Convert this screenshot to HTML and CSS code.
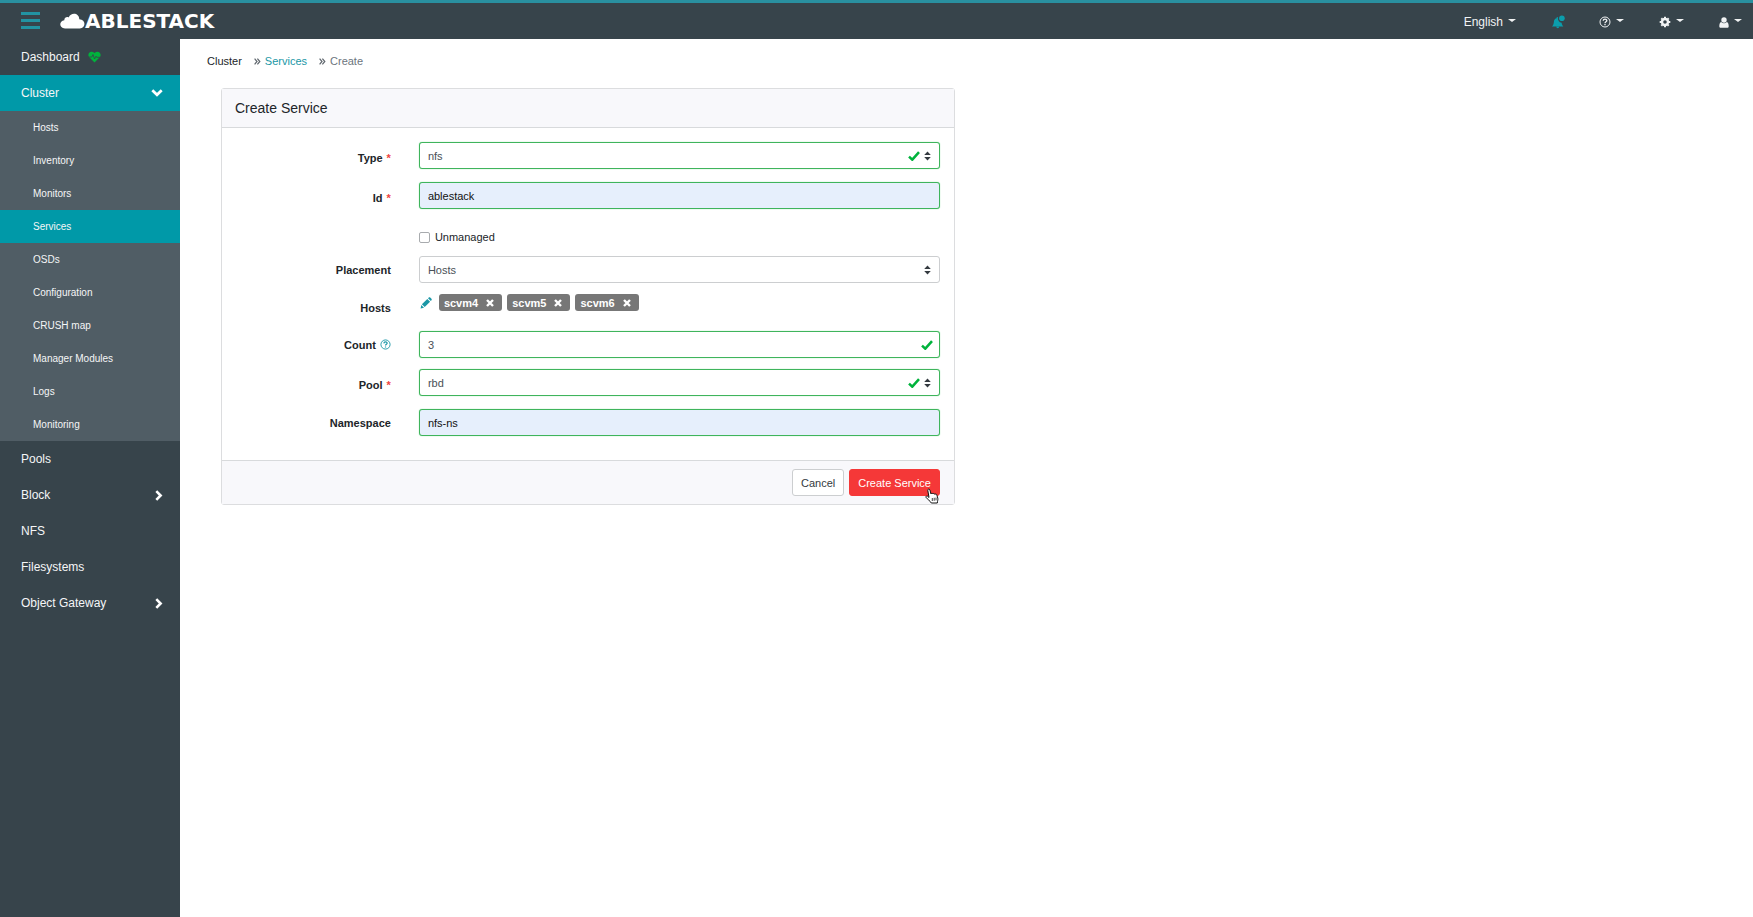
FILE: index.html
```html
<!DOCTYPE html>
<html lang="en">
<head>
<meta charset="utf-8">
<title>Create Service</title>
<link rel="stylesheet" href="styles.css">
</head>
<body>
<svg class="defs" aria-hidden="true">
  <symbol id="check" viewBox="0 0 12 10"><path d="M1 5.6L4.3 8.7L11 1.2" fill="none" stroke="#00b33c" stroke-width="2.5"/></symbol>
  <symbol id="sort" viewBox="0 0 7 10"><path d="M.2 4L3.5 .6L6.8 4zM.2 6L3.5 9.4L6.8 6z" fill="#343a40"/></symbol>
  <symbol id="times" viewBox="0 0 8 8"><path d="M1 1L7 7M7 1L1 7" stroke="#fff" stroke-width="2.4"/></symbol>
  <symbol id="right" viewBox="0 0 8 11"><path d="M1.3 1.2L5.6 5.5L1.3 9.8" fill="none" stroke="#fff" stroke-width="2.6"/></symbol>
  <symbol id="double" viewBox="0 0 7 7"><path d="M.6 .7L3 3.5L.6 6.3M3.4 .7L5.8 3.5L3.4 6.3" fill="none" stroke="#5f666d" stroke-width="1.2"/></symbol>
  <symbol id="help" viewBox="0 0 12 12"><circle cx="6" cy="6" r="5" fill="none" stroke="currentColor"/><path d="M4.2 4.8C4.3 2.5 7.8 2.6 7.8 4.6C7.8 5.8 6 5.8 6 7.2M6 8.1V9.3" fill="none" stroke="currentColor" stroke-width="1.3"/></symbol>
</svg>
<header class="topbar">
  <button class="menu-toggle" type="button" aria-label="Toggle navigation"><span></span><span></span><span></span></button>
  <a class="brand" href="#">
    <svg width="25" height="16" viewBox="0 0 25 16"><path d="M5 15.5C-1.4 15.2-1 7.6 4.3 7.2C4.3 4.6 7 3.4 8.7 4.4C10.8-1 19.3-.4 19.3 6.3C26.2 6.7 26 15.2 19.8 15.5z" fill="#fff"/></svg>
    <span>ABLESTACK</span>
  </a>
  <nav class="tools" aria-label="Tools">
    <button class="tool language" type="button">English<i class="caret"></i></button>
    <button class="tool bell" type="button" aria-label="Notifications">
      <svg width="13" height="14" viewBox="0 0 13 14" fill="#0b9dac"><path d="M0 11.4C1.8 9.8 1.7 8 2 6C2.3 4.4 3.2 3.5 4.6 3.2V2.6C4.8 1.9 5.6 1.9 5.9 2.5C5.7 5.2 7 7.4 9.6 7.7C9.9 9.4 10.3 10.4 11.4 11.4zM4.2 11.8H7.2C7 13.7 4.5 13.7 4.2 11.8z"/><circle cx="9.9" cy="3.2" r="2.8"/></svg>
    </button>
    <button class="tool help-menu" type="button" aria-label="Help"><svg width="12" height="12"><use href="#help"/></svg><i class="caret"></i></button>
    <button class="tool settings" type="button" aria-label="Settings">
      <svg width="12" height="12" viewBox="0 0 12 12"><circle cx="6" cy="6" r="3" fill="none" stroke="#f1f3f4" stroke-width="2.4"/><path d="M6 .7V2.2M6 9.8V11.3M.7 6H2.2M9.8 6H11.3M2.3 2.3L3.3 3.3M8.7 8.7L9.7 9.7M2.3 9.7L3.3 8.7M8.7 3.3L9.7 2.3" stroke="#f1f3f4" stroke-width="2"/></svg><i class="caret"></i>
    </button>
    <button class="tool user" type="button" aria-label="User">
      <svg width="10" height="11" viewBox="0 0 10 11" fill="#f1f3f4"><circle cx="5" cy="3" r="2.7"/><path d="M2.2 5C3.7 6.6 6.3 6.6 7.8 5C9.2 5.4 9.7 7.3 9.7 9.2C9.7 10.2 9 10.7 8.2 10.7H1.8C1 10.7 .3 10.2 .3 9.2C.3 7.3 .8 5.4 2.2 5z"/></svg><i class="caret"></i>
    </button>
  </nav>
</header>
<div class="shell">
  <nav class="sidebar" aria-label="Main">
    <a class="item" href="#">Dashboard
      <svg width="13" height="12" viewBox="0 0 13 12"><path d="M6.5 11.5L1.3 6.3C-1.5 3 2.5-1.4 6.5 2C10.5-1.4 14.5 3 11.7 6.3z" fill="#00b33c"/><path d="M.8 6H3.8L5 3.5L6.5 8L8 5.2L8.6 6.3H12" fill="none" stroke="#37444b" stroke-width=".8"/></svg>
    </a>
    <a class="item active" href="#">Cluster
      <svg class="arrow" width="12" height="8" viewBox="0 0 12 8"><path d="M1.3 1.3L6 5.8L10.7 1.3" fill="none" stroke="#fff" stroke-width="2.7"/></svg>
    </a>
    <div class="submenu">
      <a href="#">Hosts</a>
      <a href="#">Inventory</a>
      <a href="#">Monitors</a>
      <a class="active" href="#">Services</a>
      <a href="#">OSDs</a>
      <a href="#">Configuration</a>
      <a href="#">CRUSH map</a>
      <a href="#">Manager Modules</a>
      <a href="#">Logs</a>
      <a href="#">Monitoring</a>
    </div>
    <a class="item" href="#">Pools</a>
    <a class="item" href="#">Block <svg class="arrow" width="8" height="11"><use href="#right"/></svg></a>
    <a class="item" href="#">NFS</a>
    <a class="item" href="#">Filesystems</a>
    <a class="item" href="#">Object Gateway <svg class="arrow" width="8" height="11"><use href="#right"/></svg></a>
  </nav>
  <main class="content">
    <nav class="breadcrumb" aria-label="Breadcrumb">
      <span class="root">Cluster</span>
      <svg width="7" height="7"><use href="#double"/></svg>
      <a href="#">Services</a>
      <svg width="7" height="7"><use href="#double"/></svg>
      <span>Create</span>
    </nav>
    <form class="card">
      <h1 class="card-header">Create Service</h1>
      <div class="card-body">
        <div class="row required">
          <label for="type">Type <span class="star">*</span></label>
          <div class="control">
            <select id="type" class="field valid"><option>nfs</option></select>
            <span class="marks"><svg width="12" height="10"><use href="#check"/></svg><svg width="7" height="10"><use href="#sort"/></svg></span>
          </div>
        </div>
        <div class="row required">
          <label for="id">Id <span class="star">*</span></label>
          <div class="control"><input id="id" class="field valid filled" type="text" value="ablestack"></div>
        </div>
        <div class="row">
          <div class="check"><input id="unmanaged" type="checkbox"><label for="unmanaged">Unmanaged</label></div>
        </div>
        <div class="row">
          <label for="placement">Placement</label>
          <div class="control">
            <select id="placement" class="field"><option>Hosts</option></select>
            <span class="marks"><svg width="7" height="10"><use href="#sort"/></svg></span>
          </div>
        </div>
        <div class="row hosts">
          <span class="label">Hosts</span>
          <div class="badges">
            <button class="edit" type="button" aria-label="Edit hosts"><svg width="12" height="12" viewBox="0 0 12 12" fill="#1a97a6"><path d="M.6 11.4L1.3 8L4 10.7zM1.9 7.3L7.3 1.9L10.1 4.7L4.7 10.1zM8 1.2L8.8 .5C9.2 .1 9.8 .1 10.2 .5L11.5 1.8C11.9 2.2 11.9 2.8 11.5 3.2L10.8 4z"/></svg></button>
            <span class="badge">scvm4<button type="button" aria-label="Remove scvm4"><svg width="8" height="8"><use href="#times"/></svg></button></span>
            <span class="badge">scvm5<button type="button" aria-label="Remove scvm5"><svg width="8" height="8"><use href="#times"/></svg></button></span>
            <span class="badge">scvm6<button type="button" aria-label="Remove scvm6"><svg width="8" height="8"><use href="#times"/></svg></button></span>
          </div>
        </div>
        <div class="row">
          <label for="count">Count <svg class="hint" width="11" height="11"><use href="#help"/></svg></label>
          <div class="control">
            <input id="count" class="field valid" type="text" value="3">
            <span class="marks"><svg width="12" height="10"><use href="#check"/></svg></span>
          </div>
        </div>
        <div class="row required">
          <label for="pool">Pool <span class="star">*</span></label>
          <div class="control">
            <select id="pool" class="field valid"><option>rbd</option></select>
            <span class="marks"><svg width="12" height="10"><use href="#check"/></svg><svg width="7" height="10"><use href="#sort"/></svg></span>
          </div>
        </div>
        <div class="row">
          <label for="namespace">Namespace</label>
          <div class="control"><input id="namespace" class="field valid filled" type="text" value="nfs-ns"></div>
        </div>
      </div>
      <div class="card-footer">
        <button class="btn" type="button">Cancel</button>
        <button class="btn primary" type="button">Create Service
          <svg class="pointer" width="14" height="16" viewBox="0 0 14 16"><path d="M4 9.5L2.8 2.4C2.6 .9 4.5 .6 4.9 2L6 6C6.2 5 7.6 5 7.9 6C8.3 5.2 9.6 5.3 9.8 6.4C10.5 5.7 11.8 6 11.9 7.2L12.8 10.2C13.1 11.8 12.5 12.6 12.3 15H6.3C5.4 13 2.4 11.4 1 9.3C.6 8.1 2 7.6 2.8 8.4z" fill="#fff" stroke="#111"/><path d="M7.3 10V13M9.2 9.8V12.8M11 9.6V12.4" stroke="#111" stroke-width=".8"/></svg>
        </button>
      </div>
    </form>
  </main>
</div>
</body>
</html>
```
FILE: styles.css
```css
* { box-sizing: border-box; }
body {
  margin: 0;
  min-height: 100vh;
  display: flex;
  flex-direction: column;
  background: #fff;
  color: #212529;
  font: 11px/16px "Liberation Sans", Arial, sans-serif;
}
a { color: inherit; text-decoration: none; }
button { margin: 0; padding: 0; border: 0; background: none; color: inherit; font: inherit; cursor: pointer; }
svg { display: block; flex: none; }
.defs { position: absolute; width: 0; height: 0; }

.topbar {
  display: flex;
  align-items: center;
  height: 39px;
  padding: 0 11px 0 21px;
  border-top: 3px solid #2990a0;
  background: #37444b;
  color: #f1f3f4;
}
.menu-toggle { display: flex; flex-direction: column; gap: 4px; width: 19px; padding-bottom: 2px; }
.menu-toggle span { height: 3px; background: #2293a2; }
.brand { display: flex; align-items: center; margin-left: 20px; color: #fff; font: 700 20px/20px "DejaVu Sans", sans-serif; }
.tools { display: flex; align-items: center; margin-left: auto; padding-top: 2px; font-size: 12px; }
.tool { display: flex; align-items: center; gap: 5px; }
.language { margin-right: 36px; }
.bell { margin-right: 34px; }
.help-menu, .settings { margin-right: 35px; }
.caret { margin-bottom: 3px; border: 4px solid transparent; border-top: 3px solid currentColor; border-bottom: 0; }

.shell { display: flex; flex: 1; }
.sidebar { flex: none; width: 180px; background: #37444b; color: #f5f6f7; }
.item { display: flex; align-items: center; gap: 8px; height: 36px; padding: 0 17px 0 21px; font-size: 12px; }
.item .arrow { margin-left: auto; }
.active { background: #0099a8; }
.submenu { background: #505d65; font-size: 10px; }
.submenu a { display: flex; align-items: center; height: 33px; padding-left: 33px; }

.content { flex: 1; padding: 14px 22px 0 27px; }
.breadcrumb { display: flex; align-items: center; color: #6c757d; }
.breadcrumb svg { margin: 0 4px 0 12px; }
.breadcrumb .root { color: #212529; }
.breadcrumb a { color: #1a97a6; }

.card { width: calc(50% - 28px); margin: 19px 14px 0; border: 1px solid #dcdddf; border-radius: 3px; }
.card-header { margin: 0; padding: 9px 13px; border-bottom: 1px solid #d8dadc; background: #f8f8fb; font-size: 14px; font-weight: 400; line-height: 20px; }
.card-body { display: flex; flex-direction: column; gap: 11px; padding: 14px 14px 24px; }
.row { display: grid; grid-template-columns: 22% 1fr; column-gap: 28px; align-items: start; }
.row > label, .label { display: flex; justify-content: flex-end; gap: 4px; padding-top: 6px; font-weight: 700; }
.required { min-height: 29px; }
.required > label { padding-top: 8px; }
.hosts { min-height: 26px; }
.star { color: #f0443e; }
.hint { margin-top: 2px; color: #1a97a6; }
.control { position: relative; }
.field {
  display: block;
  width: 100%;
  height: 27px;
  margin: 0;
  padding: 0 8px;
  border: 1px solid #ccced0;
  border-radius: 3px;
  background: #fff;
  color: #495057;
  font: inherit;
  appearance: none;
}
.valid { border-color: #3fb45c; box-shadow: 0 0 1px #5fd57a; }
.filled { background: #e6effc; color: #111; }
.marks { position: absolute; top: 0; right: 9px; bottom: 0; display: flex; align-items: center; gap: 4px; pointer-events: none; }
.control > input + .marks { right: 7px; }
.check { grid-column: 2; display: flex; align-items: center; gap: 5px; padding-top: 7px; }
.check input { appearance: none; width: 11px; height: 11px; margin: 0; border: 1px solid #a8abae; border-radius: 2px; background: #fff; }
.badges { display: flex; align-items: center; gap: 5px; }
.edit { margin: 0 2px 0 1px; }
.badge { display: flex; align-items: center; gap: 8px; height: 17px; padding: 0 8px 0 5px; border-radius: 3px; background: #777; color: #fff; font-weight: 700; }

.card-footer { display: flex; justify-content: flex-end; gap: 5px; padding: 8px 14px; border-top: 1px solid #d8dadc; background: #f8f8fb; }
.btn { position: relative; height: 27px; padding: 0 8px; border: 1px solid #ccced0; border-radius: 3px; background: #fff; color: #343a40; }
.primary { border-color: #f53838; background: #f53838; color: #fff; }
.pointer { position: absolute; right: 0; bottom: -9px; }
```
